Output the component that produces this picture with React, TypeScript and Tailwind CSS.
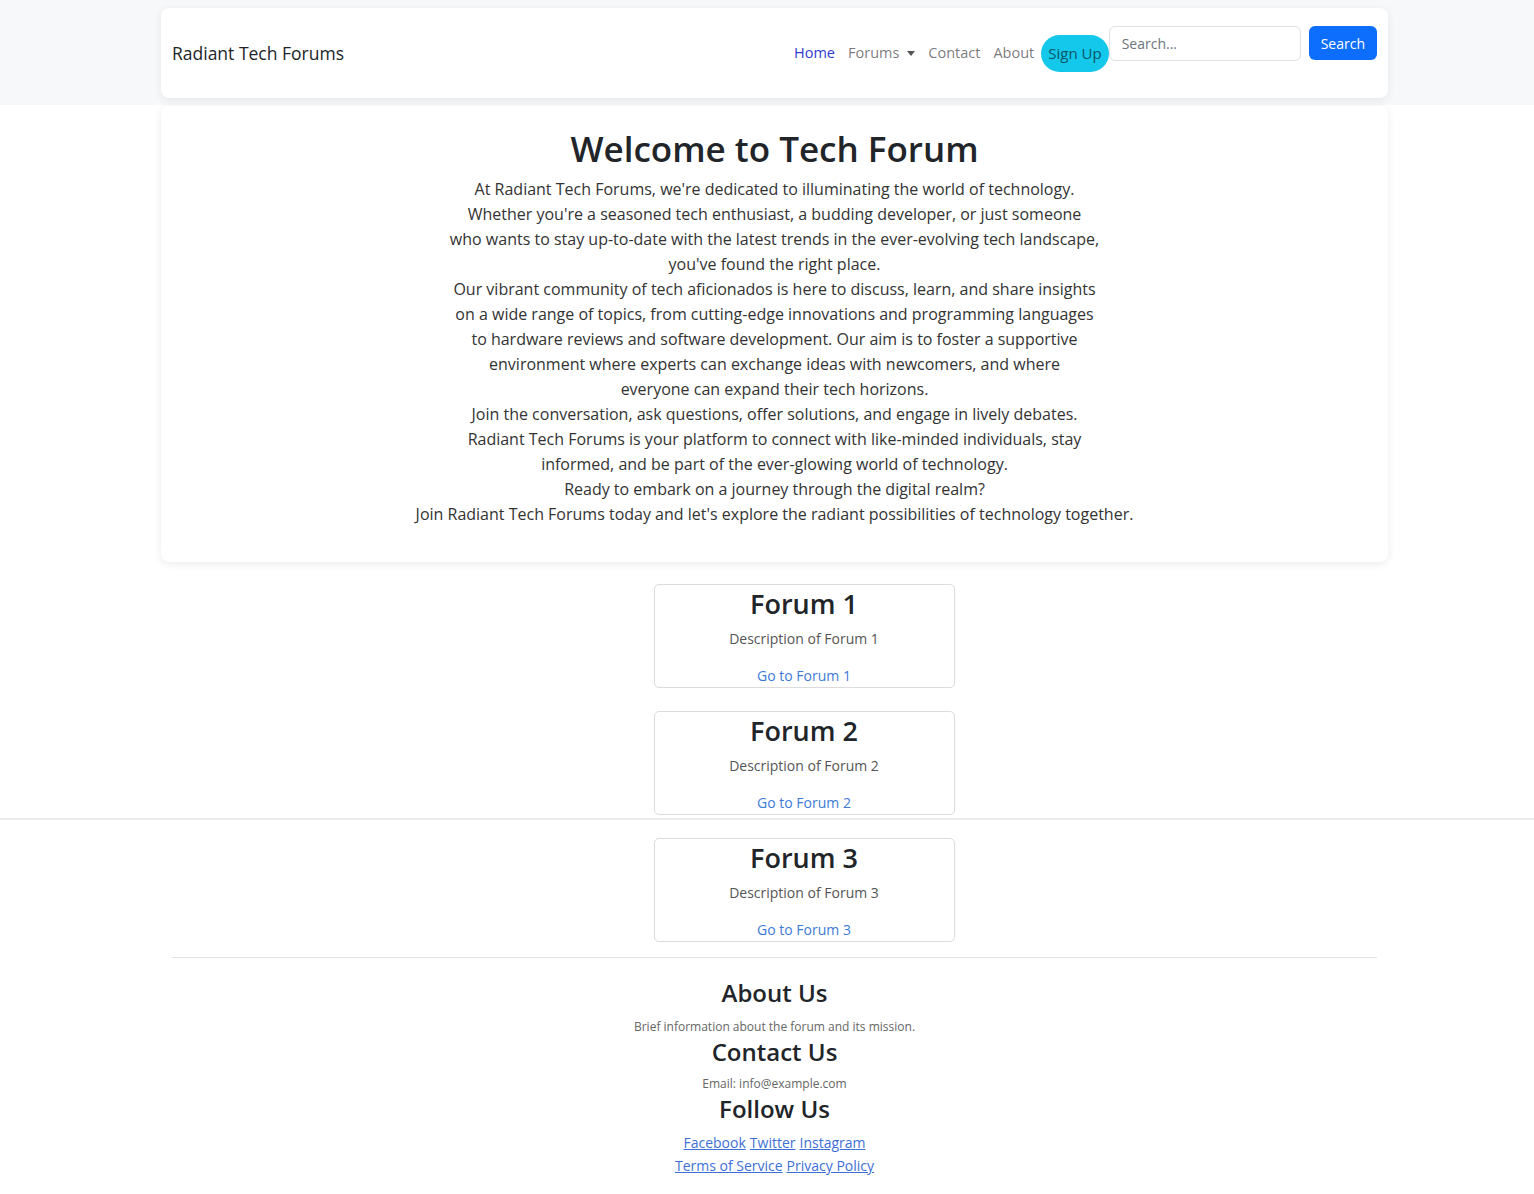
const intro = [
  "At Radiant Tech Forums, we're dedicated to illuminating the world of technology.",
  "Whether you're a seasoned tech enthusiast, a budding developer, or just someone",
  'who wants to stay up-to-date with the latest trends in the ever-evolving tech landscape,',
  "you've found the right place.",
  'Our vibrant community of tech aficionados is here to discuss, learn, and share insights',
  'on a wide range of topics, from cutting-edge innovations and programming languages',
  'to hardware reviews and software development. Our aim is to foster a supportive',
  'environment where experts can exchange ideas with newcomers, and where',
  'everyone can expand their tech horizons.',
  'Join the conversation, ask questions, offer solutions, and engage in lively debates.',
  'Radiant Tech Forums is your platform to connect with like-minded individuals, stay',
  'informed, and be part of the ever-glowing world of technology.',
  'Ready to embark on a journey through the digital realm?',
  "Join Radiant Tech Forums today and let's explore the radiant possibilities of technology together.",
];

const forums = [1, 2, 3];

export default function App() {
  return (
    <div
      className="relative min-h-screen bg-white text-[#212529]"
      style={{ fontFamily: '"Open Sans", "Noto Sans", sans-serif' }}
    >
      {/* page-height line behind the content */}
      <div className="absolute left-0 right-0 top-[818px] h-[2px] bg-[#ececec]" />

      <div className="relative bg-[#f7f8fa] pt-2 pb-[7px]">
        <nav className="ml-[161px] flex h-[90px] w-[1227px] items-center rounded-lg bg-white pl-[11px] pr-[11px] shadow-[0_2px_8px_rgba(0,0,0,0.08)]">
          <a className="text-[17.5px] text-[#212529]">Radiant Tech Forums</a>
          <div className="ml-auto flex h-full items-center">
            <ul className="flex items-center gap-[13px] text-[14.5px] text-[rgba(0,0,0,0.55)]">
              <li className="text-[#2f3bcf]">Home</li>
              <li className="flex items-center gap-[6px]">
                Forums
                <svg width="8" height="5" viewBox="0 0 8 5" className="ml-[2px]">
                  <path d="M0 0h8L4 5z" fill="#555" />
                </svg>
              </li>
              <li>Contact</li>
              <li>About</li>
            </ul>
            <button className="ml-[7px] h-[37px] rounded-full bg-[#14c8ec] px-[7px] text-[15px] text-[#0b5566]">
              Sign Up
            </button>
            <div className="mt-[18px] flex items-start gap-2 self-start">
              <input
                placeholder="Search..."
                className="h-[35px] w-[192px] rounded-md border border-[#dee2e6] px-3 text-[14px] placeholder:text-[#6c757d]"
              />
              <button className="h-[34px] rounded-md bg-[#0d6efd] px-3 text-[14px] text-white">Search</button>
            </div>
          </div>
        </nav>
      </div>

      <div className="relative ml-[161px] w-[1227px]">
        <section className="mt-px rounded-lg bg-white pt-[20px] pb-[35px] text-center shadow-[0_2px_8px_rgba(0,0,0,0.08)]">
          <h1 className="text-[35px] font-semibold leading-[46px]">Welcome to Tech Forum</h1>
          <p className="mt-[5px] text-[16px] leading-[25px] text-[#333]">
            {intro.map((line, i) => (
              <span key={i}>
                {line}
                <br />
              </span>
            ))}
          </p>
        </section>

        <div className="mt-[22px] flex flex-col items-center gap-[23px] pl-[59px]">
          {forums.map((n) => (
            <div
              key={n}
              className="flex h-[104px] w-[301px] flex-col items-center rounded-[5px] border border-[#dcdcdc] bg-white"
            >
              <h2 className="mt-[1px] text-[27px] font-semibold leading-[36px]">Forum {n}</h2>
              <p className="mt-[6px] text-[14px] text-[#555]">Description of Forum {n}</p>
              <a className="mt-[16px] text-[14px] text-[#3d7ad8]">Go to Forum {n}</a>
            </div>
          ))}
        </div>

        <footer className="mx-[11px] mt-[15px] border-t border-[#e3e3e3] pt-[19px] pb-4 text-center">
          <h3 className="text-[24px] font-semibold leading-[32px]">About Us</h3>
          <p className="mt-[9px] text-[12px] text-[#666]">Brief information about the forum and its mission.</p>
          <h3 className="text-[24px] font-semibold leading-[32px]">Contact Us</h3>
          <p className="mt-[7px] text-[12px] text-[#666]">Email: info@example.com</p>
          <h3 className="text-[24px] font-semibold leading-[32px]">Follow Us</h3>
          <div className="mt-[6px] text-[14px] leading-[23px] text-[#3d6fd6]">
            <div className="flex justify-center gap-[4px]">
              <a className="underline">Facebook</a>
              <a className="underline">Twitter</a>
              <a className="underline">Instagram</a>
            </div>
            <div className="flex justify-center gap-[4px]">
              <a className="underline">Terms of Service</a>
              <a className="underline">Privacy Policy</a>
            </div>
          </div>
        </footer>
      </div>
    </div>
  );
}
